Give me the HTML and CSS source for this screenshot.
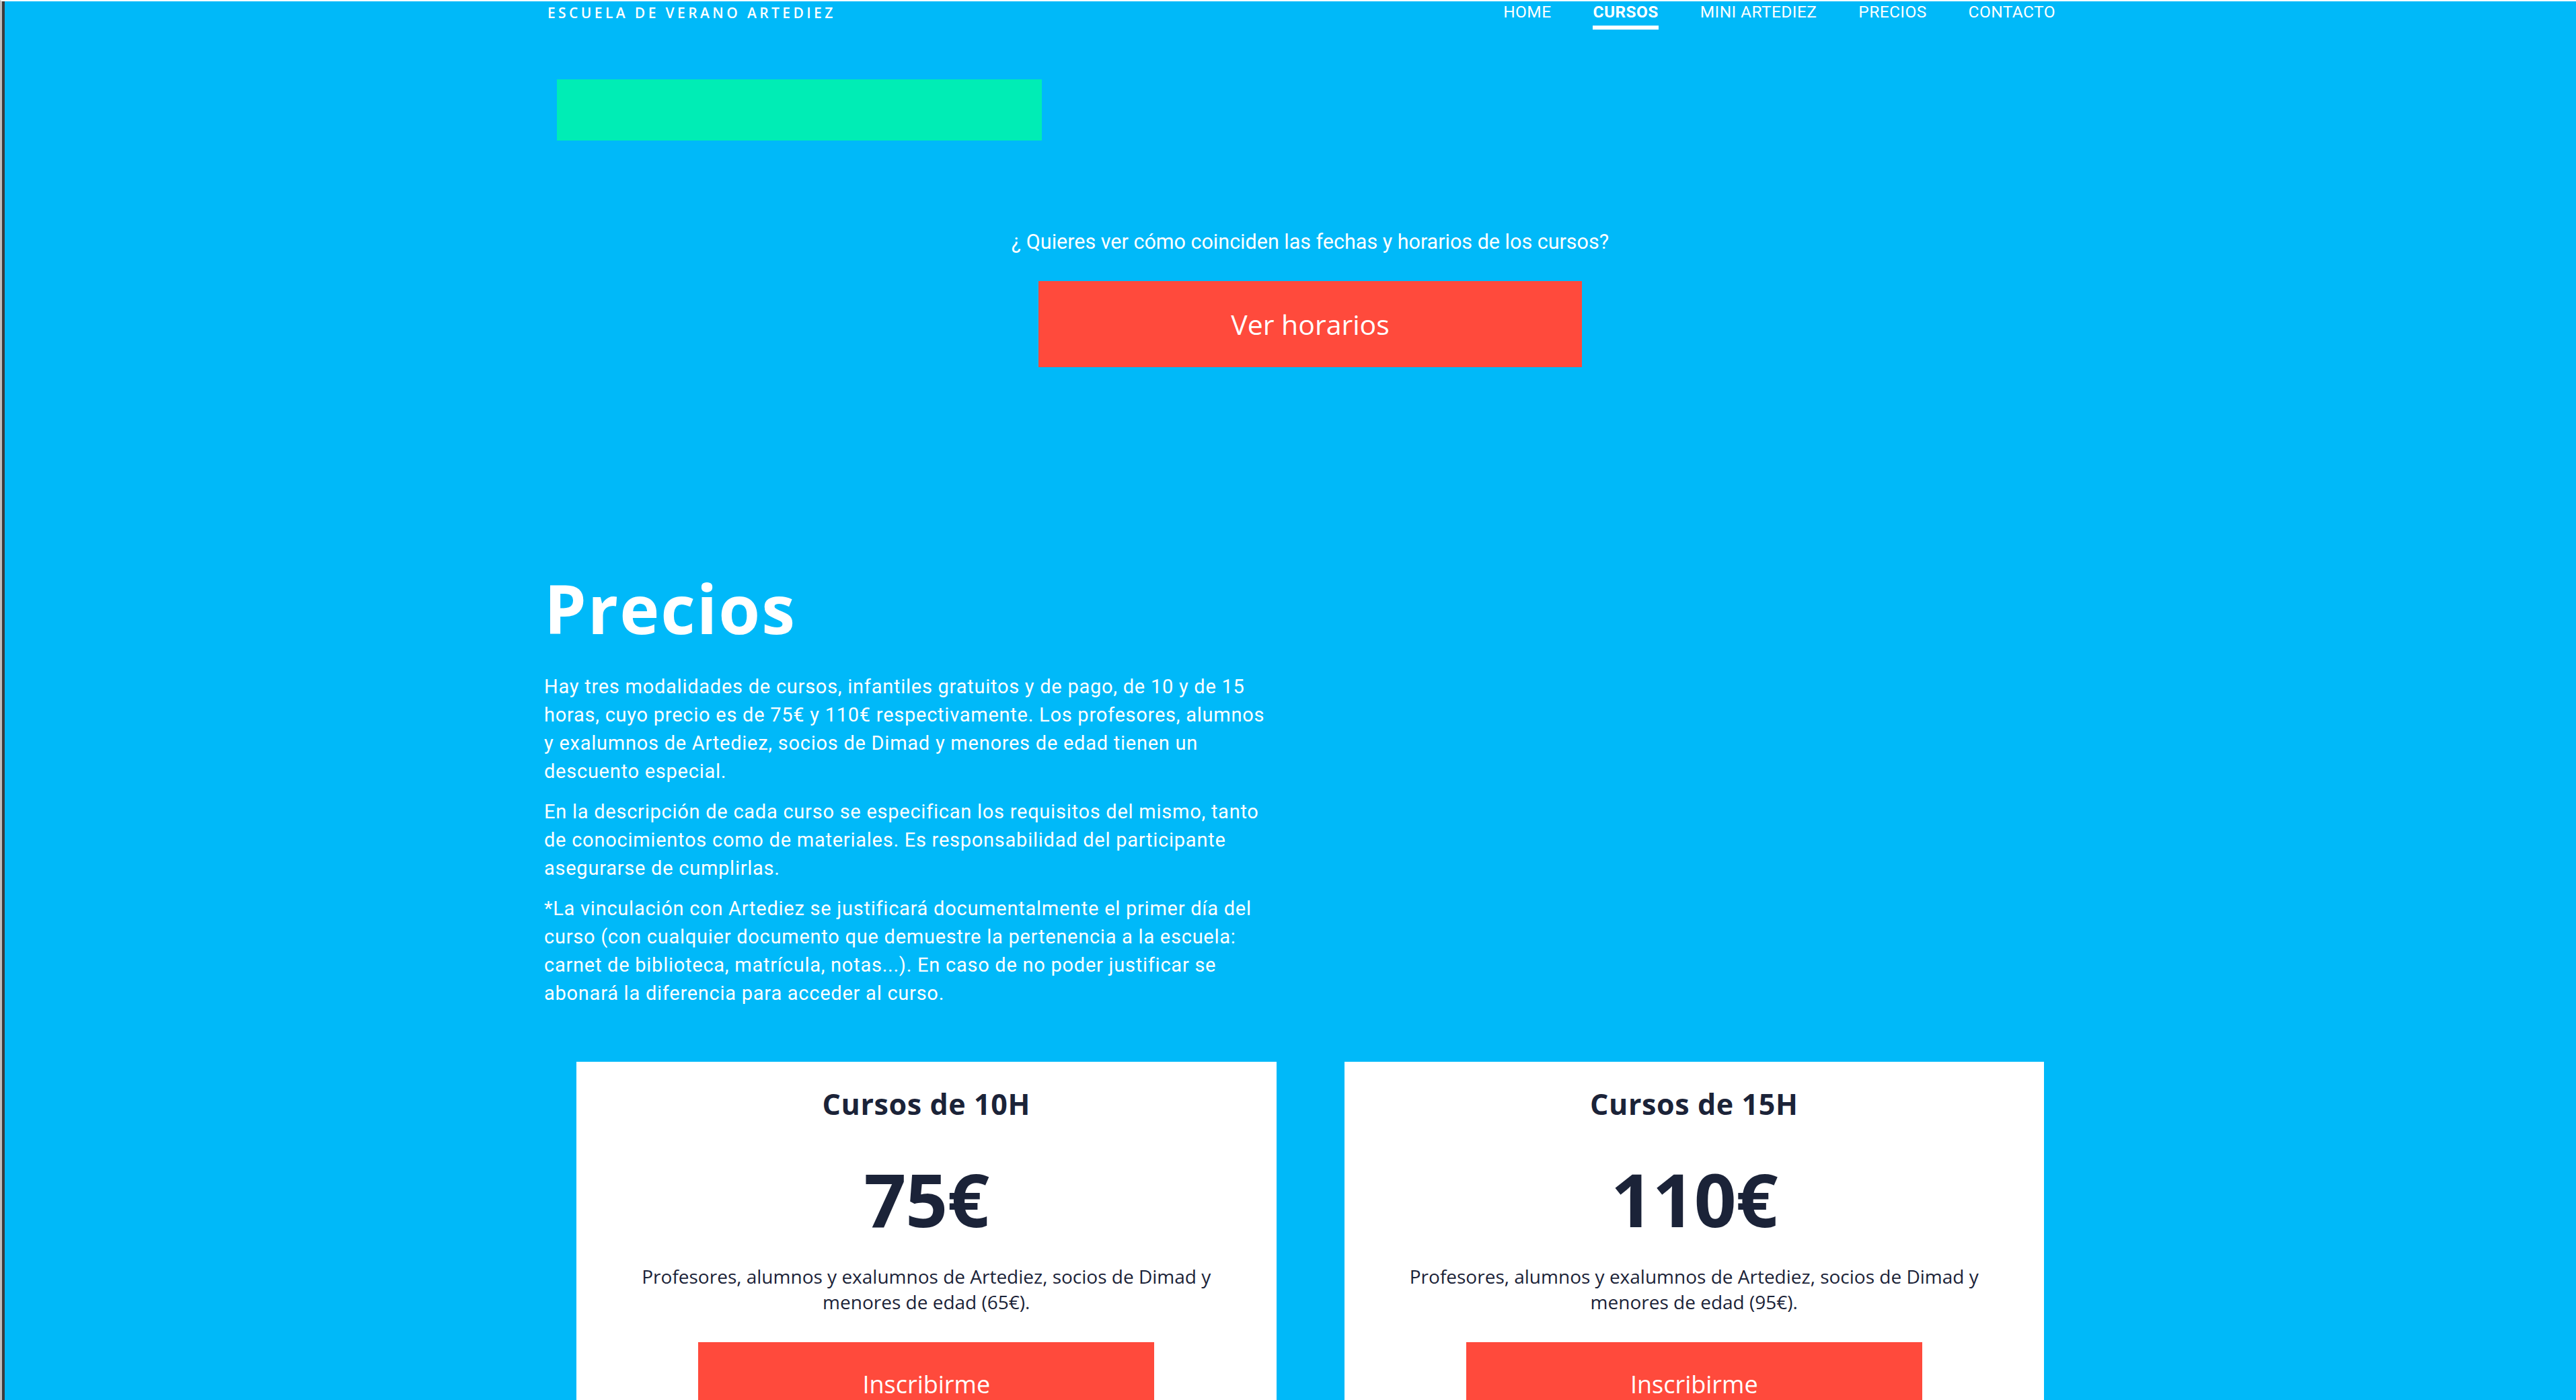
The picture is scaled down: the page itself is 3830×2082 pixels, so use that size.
FILE: index.html
```html
<!DOCTYPE html>
<html lang="es">
<head>
<meta charset="utf-8">
<title>Escuela de Verano Artediez - Precios</title>
<link rel="stylesheet" href="styles.css">
</head>
<body>
<div class="page">
  <div class="wrap">
    <header class="top">
      <div class="brand">ESCUELA DE VERANO ARTEDIEZ</div>
      <nav class="nav">
        <a class="nav-item" href="#">HOME</a>
        <a class="nav-item active" href="#">CURSOS</a>
        <a class="nav-item" href="#">MINI ARTEDIEZ</a>
        <a class="nav-item" href="#">PRECIOS</a>
        <a class="nav-item" href="#">CONTACTO</a>
      </nav>
    </header>

    <div class="green"></div>

    <p class="question">¿ Quieres ver cómo coinciden las fechas y horarios de los cursos?</p>
    <a class="btn btn-big" href="#">Ver horarios</a>

    <section class="prices">
      <h2 class="prices-title">Precios</h2>
      <p class="text first">Hay tres modalidades de cursos, infantiles gratuitos y de pago, de 10 y de 15<br>horas, cuyo precio es de 75€ y 110€ respectivamente. Los profesores, alumnos<br>y exalumnos de Artediez, socios de Dimad y menores de edad tienen un<br>descuento especial.</p>
      <p class="text">En la descripción de cada curso se especifican los requisitos del mismo, tanto<br>de conocimientos como de materiales. Es responsabilidad del participante<br>asegurarse de cumplirlas.</p>
      <p class="text">*La vinculación con Artediez se justificará documentalmente el primer día del<br>curso (con cualquier documento que demuestre la pertenencia a la escuela:<br>carnet de biblioteca, matrícula, notas...). En caso de no poder justificar se<br>abonará la diferencia para acceder al curso.</p>
    </section>

    <div class="cards">
      <div class="card">
        <h3 class="card-title">Cursos de 10H</h3>
        <div class="price">75€</div>
        <p class="card-desc">Profesores, alumnos y exalumnos de Artediez, socios de Dimad y<br>menores de edad (65€).</p>
        <a class="btn btn-card" href="#">Inscribirme</a>
      </div>
      <div class="card">
        <h3 class="card-title">Cursos de 15H</h3>
        <div class="price">110€</div>
        <p class="card-desc">Profesores, alumnos y exalumnos de Artediez, socios de Dimad y<br>menores de edad (95€).</p>
        <a class="btn btn-card" href="#">Inscribirme</a>
      </div>
    </div>
  </div>
</div>
</body>
</html>
```

FILE: styles.css
```css
html, body {
  margin: 0;
  padding: 0;
}

body {
  background: #00b9f9;
  border-left: 3px solid #bdbdbd;
  border-top: 2px solid #ffffff;
  overflow: hidden;
  font-family: Roboto, "Liberation Sans", sans-serif;
  color: #ffffff;
}

.page {
  border-left: 4px solid #3c3c3c;
  padding-left: 59px;
  display: flex;
  justify-content: center;
  min-height: 2080px;
}

.wrap {
  width: 2278px;
  flex: none;
}

/* Header */
.top {
  display: flex;
  justify-content: space-between;
  align-items: flex-start;
  height: 42px;
  padding: 0 31px 0 5px;
}

.brand {
  padding-top: 2px;
  font-family: "Open Sans", sans-serif;
  font-weight: 600;
  font-size: 21px;
  line-height: 30px;
  letter-spacing: 4.4px;
  color: #ffffff;
}

.nav {
  display: flex;
  gap: 62px;
}

.nav-item {
  display: block;
  padding-top: 1px;
  font-family: Roboto, sans-serif;
  font-size: 24.5px;
  line-height: 30px;
  letter-spacing: 0.4px;
  color: #ffffff;
  text-decoration: none;
}

.nav-item.active {
  font-weight: 700;
}

.nav-item.active::after {
  content: "";
  display: block;
  height: 6px;
  margin-top: 5px;
  background: #ffffff;
}

/* Green block */
.green {
  margin: 74px 0 0 19px;
  width: 721px;
  height: 91px;
  background: #00edb5;
}

.question {
  margin: 131px 0 0;
  text-align: center;
  font-family: Roboto, sans-serif;
  font-size: 30.5px;
  line-height: 40px;
  color: #ffffff;
}

.btn {
  display: flex;
  align-items: center;
  justify-content: center;
  background: #ff4a3c;
  color: #ffffff;
  text-decoration: none;
  font-family: "Open Sans", sans-serif;
  font-weight: 400;
}

.btn-big {
  margin: 38px auto 0;
  width: 808px;
  height: 128px;
  font-size: 41px;
}

/* Prices */
.prices-title {
  margin: 303px 0 0;
  padding-left: 0;
  font-family: "Open Sans", sans-serif;
  font-weight: 700;
  font-size: 100px;
  line-height: 110px;
  letter-spacing: 2px;
  color: #ffffff;
}

.text {
  margin: 18px 0 0;
  font-family: Roboto, sans-serif;
  font-size: 29px;
  line-height: 42px;
  letter-spacing: 0.75px;
  color: #ffffff;
  white-space: nowrap;
}

.text.first {
  margin-top: 41px;
}

/* Cards */
.cards {
  margin-top: 81px;
  display: flex;
  gap: 101px;
  padding: 0 48px;
}

.card {
  flex: 1;
  background: #ffffff;
  padding-top: 38px;
  text-align: center;
  color: #1b2338;
  height: 600px;
}

.card-title {
  margin: 0;
  font-family: "Open Sans", sans-serif;
  font-weight: 700;
  font-size: 43px;
  line-height: 50px;
  letter-spacing: 0.6px;
}

.price {
  margin-top: 55px;
  font-family: "Open Sans", sans-serif;
  font-weight: 700;
  font-size: 110px;
  line-height: 120px;
  letter-spacing: -1px;
}

.card-desc {
  margin: 37px 0 0;
  font-family: "Open Sans", sans-serif;
  font-size: 28px;
  line-height: 38px;
  letter-spacing: 0;
}

.btn-card {
  margin: 41px auto 0;
  width: 678px;
  height: 128px;
  font-size: 36px;
  padding-bottom: 4px;
  box-sizing: border-box;
}
```
